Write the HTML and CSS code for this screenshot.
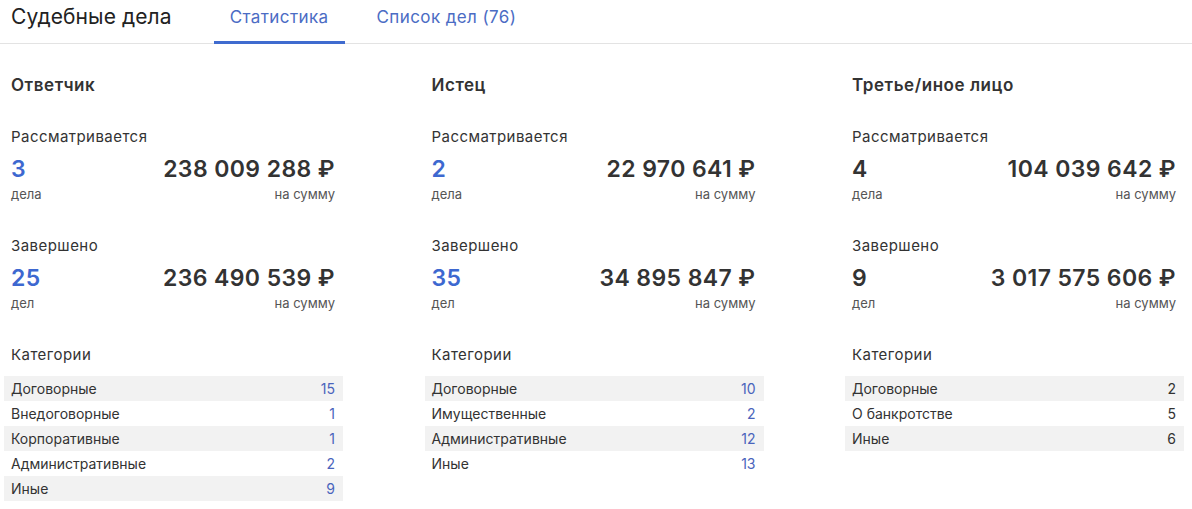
FILE: index.html
```html
<!DOCTYPE html>
<html lang="ru">
<head>
<meta charset="utf-8">
<link rel="stylesheet" href="styles.css">
</head>
<body>
<header class="topbar">
  <div class="title">Судебные дела</div>
  <nav class="tabs">
    <div class="tab active">Статистика</div>
    <div class="tab">Список дел (76)</div>
  </nav>
</header>
<main class="grid">
  <section class="col">
    <h2 class="role">Ответчик</h2>
    <div class="block">
      <div class="label">Рассматривается</div>
      <div class="pair">
        <div class="big link">3</div>
        <div class="big">238 009 288 ₽</div>
      </div>
      <div class="pair">
        <div class="sub">дела</div>
        <div class="sub">на сумму</div>
      </div>
    </div>
    <div class="block">
      <div class="label">Завершено</div>
      <div class="pair">
        <div class="big link">25</div>
        <div class="big">236 490 539 ₽</div>
      </div>
      <div class="pair">
        <div class="sub">дел</div>
        <div class="sub">на сумму</div>
      </div>
    </div>
    <div class="block">
      <div class="label">Категории</div>
      <ul class="cats">
        <li class="cat"><span>Договорные</span><span class="num link">15</span></li>
        <li class="cat"><span>Внедоговорные</span><span class="num link">1</span></li>
        <li class="cat"><span>Корпоративные</span><span class="num link">1</span></li>
        <li class="cat"><span>Административные</span><span class="num link">2</span></li>
        <li class="cat"><span>Иные</span><span class="num link">9</span></li>
      </ul>
    </div>
  </section>
  <section class="col">
    <h2 class="role">Истец</h2>
    <div class="block">
      <div class="label">Рассматривается</div>
      <div class="pair">
        <div class="big link">2</div>
        <div class="big">22 970 641 ₽</div>
      </div>
      <div class="pair">
        <div class="sub">дела</div>
        <div class="sub">на сумму</div>
      </div>
    </div>
    <div class="block">
      <div class="label">Завершено</div>
      <div class="pair">
        <div class="big link">35</div>
        <div class="big">34 895 847 ₽</div>
      </div>
      <div class="pair">
        <div class="sub">дел</div>
        <div class="sub">на сумму</div>
      </div>
    </div>
    <div class="block">
      <div class="label">Категории</div>
      <ul class="cats">
        <li class="cat"><span>Договорные</span><span class="num link">10</span></li>
        <li class="cat"><span>Имущественные</span><span class="num link">2</span></li>
        <li class="cat"><span>Административные</span><span class="num link">12</span></li>
        <li class="cat"><span>Иные</span><span class="num link">13</span></li>
      </ul>
    </div>
  </section>
  <section class="col">
    <h2 class="role">Третье/иное лицо</h2>
    <div class="block">
      <div class="label">Рассматривается</div>
      <div class="pair">
        <div class="big">4</div>
        <div class="big">104 039 642 ₽</div>
      </div>
      <div class="pair">
        <div class="sub">дела</div>
        <div class="sub">на сумму</div>
      </div>
    </div>
    <div class="block">
      <div class="label">Завершено</div>
      <div class="pair">
        <div class="big">9</div>
        <div class="big">3 017 575 606 ₽</div>
      </div>
      <div class="pair">
        <div class="sub">дел</div>
        <div class="sub">на сумму</div>
      </div>
    </div>
    <div class="block">
      <div class="label">Категории</div>
      <ul class="cats">
        <li class="cat"><span>Договорные</span><span class="num">2</span></li>
        <li class="cat"><span>О банкротстве</span><span class="num">5</span></li>
        <li class="cat"><span>Иные</span><span class="num">6</span></li>
      </ul>
    </div>
  </section>
</main>
</body>
</html>
```

FILE: styles.css
```css
* { box-sizing: border-box; }
html, body {
  margin: 0;
  padding: 0;
  background: #fff;
  font-family: Inter, "Noto Sans", "Liberation Sans", sans-serif;
  color: #333;
}
.topbar {
  display: flex;
  align-items: stretch;
  height: 44px;
  border-bottom: 1px solid #e3e3e3;
  padding-left: 11px;
}
.title {
  font-size: 21px;
  letter-spacing: 0.1px;
  line-height: 33px;
  color: #222;
  margin-right: 42px;
}
.tabs {
  display: flex;
  gap: 16px;
}
.tab {
  padding: 0 16px;
  font-size: 17px;
  letter-spacing: 0.4px;
  line-height: 35px;
  color: #4b6cc4;
  border-bottom: 3px solid transparent;
  margin-bottom: -1px;
}
.tab.active {
  border-bottom-color: #3f6bcf;
}
.grid {
  display: grid;
  grid-template-columns: repeat(3, 324px);
  column-gap: 96.5px;
  padding: 31px 0 0 11px;
}
.col { min-width: 0; }
.role {
  margin: 0;
  font-size: 17px;
  letter-spacing: 0.55px;
  font-weight: 600;
  line-height: 20px;
  color: #333;
}
.block { margin-top: 32px; }
.block + .block { margin-top: 33px; }
.label {
  font-size: 15px;
  letter-spacing: 0.45px;
  line-height: 20px;
  color: #333;
}
.pair {
  display: flex;
  justify-content: space-between;
  align-items: baseline;
}
.big {
  font-size: 23px;
  letter-spacing: 0.4px;
  font-weight: 600;
  line-height: 32px;
  margin-top: 6px;
  color: #333;
}
.sub {
  font-size: 13px;
  line-height: 18px;
  color: #555;
}
.link { color: #3d68d0; }
.cats {
  list-style: none;
  margin: 11px -8px 0 -7px;
  padding: 0;
}
.cat {
  display: flex;
  justify-content: space-between;
  height: 25px;
  align-items: center;
  padding: 0 8px 0 7px;
  font-size: 14px;
  color: #333;
}
.cat:nth-child(odd) { background: #f2f2f2; }
.cat .num { color: #333; }
.cat .num.link { color: #4a64bc; }
```
